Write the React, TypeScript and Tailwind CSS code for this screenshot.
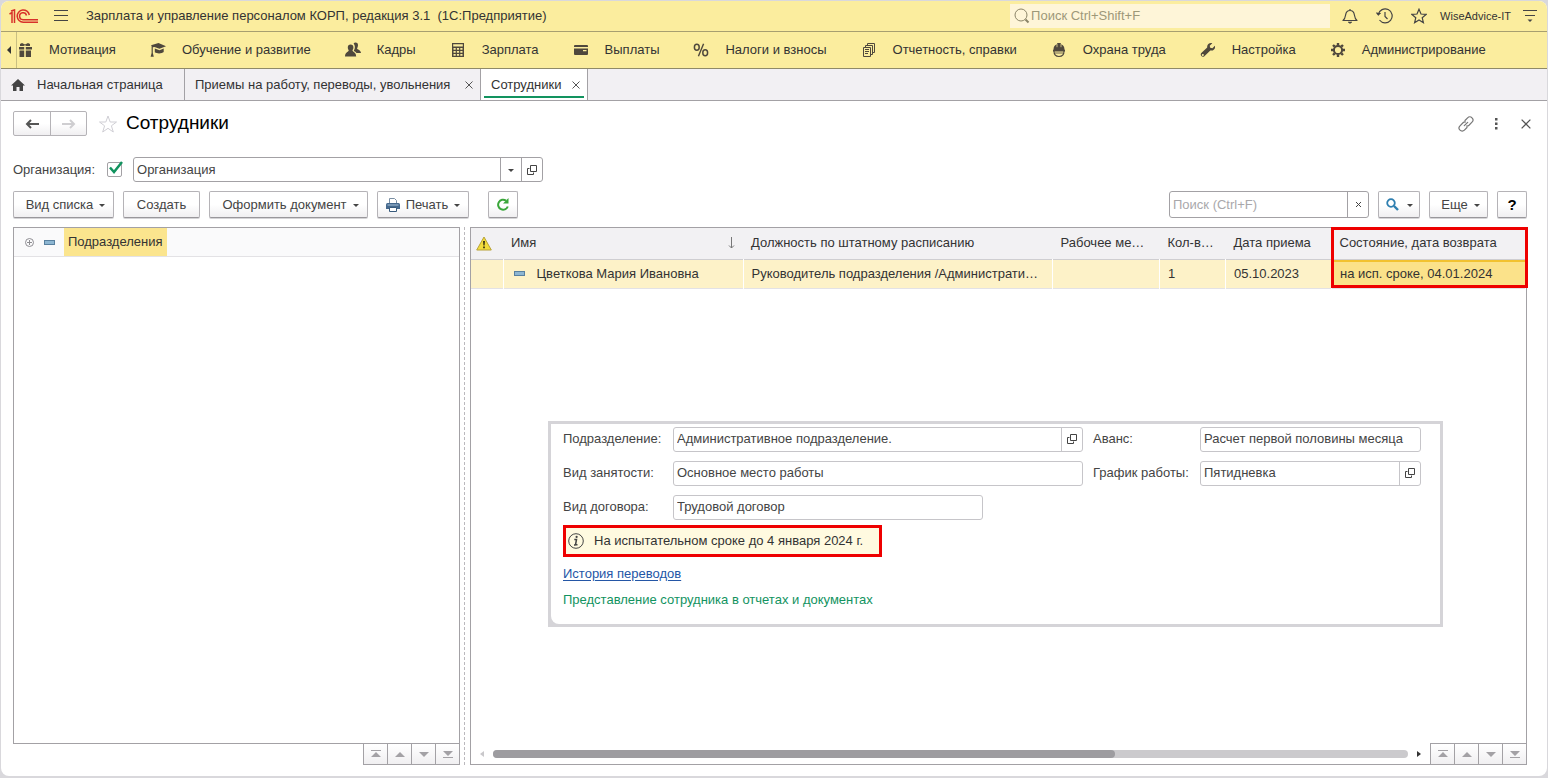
import React, { useState } from 'react';

interface NavItem {
  label: string;
  icon: React.ReactNode;
}

interface EmployeeRow {
  name: string;
  position: string;
  workplace: string;
  count: string;
  hired: string;
  state: string;
}

const GiftIcon = () => (
  <svg width="16" height="16" viewBox="0 0 16 16" fill="currentColor">
    <path d="M2 5h5.2v2.6H2zM8.800 5H15v2.6H8.800zM2.500 8.600h4.700V15H2.500zM8.800 8.600h5.200V15H8.800z" />
    <path d="M3 4V2l2-1 3 1.500L11 1l2 1v2H9.500L8 3.200 6.500 4z" />
  </svg>
);

const CapIcon = () => (
  <svg width="16" height="16" viewBox="0 0 16 16" fill="currentColor">
    <path d="M1 3.200L8.500 1 16 4.200 9.500 6.800 4.500 5 2.800 5.300V11l1 3.800H.6L1.600 11V4z" />
    <path d="M4.800 6.400l4.700 1.800 4.200-1.700V10c-1.600 1.700-6.600 2-8.900.3z" />
  </svg>
);

const PeopleIcon = () => (
  <svg width="16" height="16" viewBox="0 0 16 16" fill="currentColor">
    <path d="M8.600 1.500c1-1.600 4.300-1.400 4.400 1.400 0 2-.8 2.700-.9 3.500-.1 1.200 3.900 1.300 3.900 4.600h-4.600c-.5-1.200-1.800-1.700-2.600-2.100C9.300 7.500 10 6.500 9.800 4.600c0-1-.5-2.200-1.200-3.100z" />
    <path d="M5.600 2.400c1.800 0 2.900 1.100 2.800 3 0 1.400-.6 2.100-.9 2.900-.3 1.600 3.700 1.800 3.700 6.200H0c0-4.400 4-4.600 3.700-6.200-.3-.8-.9-1.500-.9-2.900-.1-1.900 1-3 2.800-3z" />
  </svg>
);

const CalculatorIcon = () => (
  <svg width="16" height="16" viewBox="0 0 16 16" fill="currentColor">
    <path fillRule="evenodd" d="M2 1h12v14H2zM3.200 2.200v2.300h9.600V2.200zM3.500 6v1.800h2.200V6zM6.900 6v1.800h2.200V6zM10.300 6v1.800h2.200V6zM3.500 9v1.800h2.200V9zM6.900 9v1.800h2.200V9zM10.300 9v1.800h2.200V9zM3.500 12v1.800h2.200V12zM6.900 12v1.800h2.200V12zM10.300 12v1.800h2.200V12z" />
  </svg>
);

const CardIcon = () => (
  <svg width="16" height="16" viewBox="0 0 16 16" fill="currentColor">
    <path d="M1 4q0-1 1-1h12q1 0 1 1v1H1z" />
    <path fillRule="evenodd" d="M1 6.500h14V12q0 1-1 1H2q-1 0-1-1zM10 8v1.200h3.500V8z" />
  </svg>
);

const PercentIcon = () => (
  <svg width="16" height="16" viewBox="0 0 16 16" fill="none" stroke="currentColor" strokeWidth="1.500">
    <ellipse cx="3.800" cy="5.200" rx="2.400" ry="3" />
    <ellipse cx="12.200" cy="10.800" rx="2.400" ry="3" />
    <path d="M10.600 1.800L5.400 14.200" strokeWidth="1.400" />
  </svg>
);

const DocsIcon = () => (
  <svg width="16" height="16" viewBox="0 0 16 16" fill="none" stroke="currentColor">
    <path d="M2.500 5.500h7v9h-7zM4.500 5.500v-2h7v9h-2M6.500 3.500v-2h7v9h-2" />
    <path d="M4 7.500h4M4 9.500h4M4 11.500h3" />
  </svg>
);

const HelmetIcon = () => (
  <svg width="16" height="16" viewBox="0 0 16 16">
    <path d="M2.500 7.500c0-3 1.500-4.700 3.300-5.300L6.500 1h3l.7 1.200c1.800.6 3.300 2.300 3.300 5.300l.5.500v1.500H2V8z" fill="currentColor" />
    <path d="M6 2v3.200M10 2v3.200" stroke="#fbed9e" strokeWidth="0.700" />
    <path d="M3 9c0 3.500 2.200 5.500 5 5.500s5-2 5-5.500" fill="none" stroke="currentColor" strokeWidth="1.200" />
    <path d="M4 11h8" stroke="currentColor" strokeWidth="0.800" />
  </svg>
);

const WrenchIcon = () => (
  <svg width="16" height="16" viewBox="0 0 16 16" fill="currentColor">
    <path d="M14.900 3.700l-2.500 2.500-2.200-.5-.5-2 2.600-2.500C9.800.4 6.700 2 7.200 5.500L1.300 11c-1.800 1.700.9 5.200 3.100 3.200l5.900-5.700c3 .7 5.500-1.700 4.600-4.800zM3.800 13.200a1 1 0 1 1-1-1.200 1 1 0 0 1 1 1.200z" />
  </svg>
);

const GearIcon = () => (
  <svg width="16" height="16" viewBox="0 0 16 16" fill="none" stroke="currentColor">
    <circle cx="8" cy="8" r="4.100" strokeWidth="2" />
    <path strokeWidth="2.400" d="M8 1v2.500M8 12.500V15M1 8h2.500M12.500 8H15M3 3l1.700 1.700M11.300 11.300L13 13M13 3l-1.700 1.700M4.700 11.300L3 13" />
  </svg>
);

const OneCLogo = () => (
  <svg width="30" height="14" viewBox="0 0 30 14" fill="none" stroke="#d8322a" strokeWidth="1.500">
    <path d="M.5 5L3 3.500V14M2 2L5.500.9V14" />
    <path d="M20.300 6A6.100 6.100 0 1 0 14.200 13.200H29" />
    <path d="M17.500 6.500A3.500 3.500 0 1 0 14.200 10.700H29" />
  </svg>
);

const WarningIcon = () => (
  <svg width="16" height="15" viewBox="0 0 16 15">
    <path d="M8 1L15.300 14H.7z" fill="#f2dc3c" stroke="#b8a236" strokeLinejoin="round" />
    <path d="M7 5h2l-.4 4.500H7.400zM7.100 10.500h1.800v1.800H7.100z" fill="#3b3512" />
  </svg>
);

const OpenIcon = () => (
  <svg width="10" height="10" viewBox="0 0 10 10" fill="none" stroke="#444">
    <path d="M3.500.5h6v6h-6zM2.500 3.500h-2v6h6v-2" />
  </svg>
);

const PrinterIcon = () => (
  <svg width="14" height="14" viewBox="0 0 14 14">
    <path d="M3.500 6V.5h5l2 2V6z" fill="#fff" stroke="#7a8ea3" />
    <path d="M1.500 5h11q1.500 0 1.500 1.500V11H0V6.500Q0 5 1.500 5z" fill="#44688d" />
    <path d="M1.500 7h11" stroke="#a9c3da" />
    <path d="M3.500 9.500h7v4h-7z" fill="#fff" stroke="#385a7c" />
  </svg>
);

const LinkIcon = () => (
  <svg width="16" height="16" viewBox="0 0 16 16" fill="none" stroke="#777" strokeWidth="1.200" strokeLinecap="round">
    <path d="M7 4.500l2.600-2.700a3 3 0 0 1 4.400 4.400L11 9.200a3 3 0 0 1-2.500.8M9 11.500l-2.600 2.700A3 3 0 0 1 2 9.800l3-3a3 3 0 0 1 2.500-.8M6.300 9.700l3.400-3.400" />
  </svg>
);

const MinusMark = () => <span className="h-[5px] w-[11px] shrink-0 border border-[#58809f] bg-[#8db6d2]" />;

const Caret = () => (
  <svg className="mt-[2px] shrink-0" width="6" height="3" viewBox="0 0 6 3">
    <path d="M0 0h6L3 3z" fill="#444" />
  </svg>
);

const CloseButton = ({ size }: { size: number }) => (
  <button aria-label="Закрыть">
    <svg width={size} height={size} viewBox="0 0 8 8" stroke="#555" strokeWidth="1">
      <path d="M.5.5l7 7M7.500.5l-7 7" />
    </svg>
  </button>
);

const navItems: NavItem[] = [
  { label: 'Мотивация', icon: <GiftIcon /> },
  { label: 'Обучение и развитие', icon: <CapIcon /> },
  { label: 'Кадры', icon: <PeopleIcon /> },
  { label: 'Зарплата', icon: <CalculatorIcon /> },
  { label: 'Выплаты', icon: <CardIcon /> },
  { label: 'Налоги и взносы', icon: <PercentIcon /> },
  { label: 'Отчетность, справки', icon: <DocsIcon /> },
  { label: 'Охрана труда', icon: <HelmetIcon /> },
  { label: 'Настройка', icon: <WrenchIcon /> },
  { label: 'Администрирование', icon: <GearIcon /> },
];

const employees: EmployeeRow[] = [
  {
    name: 'Цветкова Мария Ивановна',
    position: 'Руководитель подразделения /Администрати…',
    workplace: '',
    count: '1',
    hired: '05.10.2023',
    state: 'на исп. сроке, 04.01.2024',
  },
];

const buttonClass =
  'flex h-[27px] items-center justify-center rounded-xs border border-[#b5b3b7] border-b-[#99979b] bg-linear-to-b from-white from-50% to-[#f0eff1] text-[#444] shadow-[0_1px_0_#d5d4d7]';

function Field({ id, value, open, className = '' }: { id: string; value: string; open?: boolean; className?: string }) {
  return (
    <div className={`flex h-[25px] rounded-[3px] border border-[#c6c5c9] bg-white ${className}`}>
      <input id={id} defaultValue={value} className="w-full min-w-0 flex-1 px-[3px] text-[#444] outline-none" />
      {open && (
        <button aria-label="Открыть" className="flex w-[21px] items-center justify-center border-l border-[#c6c5c9]">
          <OpenIcon />
        </button>
      )}
    </div>
  );
}

function ListButtons() {
  const arrows = [
    { label: 'В начало', path: 'M1 1h10v1H1zM1 8h10L6 3z' },
    { label: 'Вверх', path: 'M1 8h10L6 3z' },
    { label: 'Вниз', path: 'M1 3h10L6 8z' },
    { label: 'В конец', path: 'M1 2h10L6 7zM1 8h10v1H1z' },
  ];
  return (
    <div className="flex border-t border-[#a3a1a5]">
      {arrows.map(arrow => (
        <button
          key={arrow.label}
          aria-label={arrow.label}
          className="box-content flex h-5 w-[23px] items-center justify-center border-l border-[#a3a1a5] bg-linear-to-b from-white to-[#f0eff1]"
        >
          <svg width="12" height="10" viewBox="0 0 12 10">
            <path d={arrow.path} fill="#a3a1a5" />
          </svg>
        </button>
      ))}
    </div>
  );
}

export default function App() {
  const [orgEnabled, setOrgEnabled] = useState(true);

  return (
    <div className="flex min-h-screen flex-col bg-[#d9d8dc] px-px pt-px pb-[2px] font-['Liberation_Sans',Arial,sans-serif] text-[13px] leading-4 text-[#333]">
      <div className="flex flex-1 flex-col overflow-hidden rounded-lg bg-white">
        {/* Title bar */}
        <header className="flex h-[31px] items-center border-b border-[#a79f70] bg-[#fbed9e] pr-[10px] pl-2">
          <OneCLogo />
          <button aria-label="Меню" className="ml-[15px]">
            <svg width="14" height="12" viewBox="0 0 14 12" stroke="#444">
              <path d="M0 .5h14M0 5.500h14M0 10.500h14" />
            </svg>
          </button>
          <h1 className="ml-[18px] whitespace-pre">Зарплата и управление персоналом КОРП, редакция 3.1  (1С:Предприятие)</h1>
          <label className="ml-auto flex h-6 w-80 items-center bg-[#fef5d8] px-1">
            <svg width="16" height="16" viewBox="0 0 16 16" fill="none" stroke="#8a8468">
              <circle cx="7" cy="7" r="6" />
              <path d="M11.500 11.500l3 3" strokeWidth="2" />
            </svg>
            <input aria-label="Поиск" placeholder="Поиск Ctrl+Shift+F" className="ml-px min-w-0 flex-1 outline-none placeholder:text-[#9d9878]" />
          </label>
          <div className="ml-3 flex items-center">
            <button aria-label="Уведомления" className="mr-[18px]">
              <svg width="16" height="16" viewBox="0 0 16 16" fill="none" stroke="#444" strokeWidth="1.200">
                <path d="M1 12.500c2-1.500 2.200-2.800 2.600-5.500C4 4 5.500 2.500 8 2.500S12 4 12.400 7c.4 2.700.6 4 2.600 5.500zM8 1v1.500" strokeLinejoin="round" />
                <path d="M6 14h4l-2 1.500z" fill="#444" strokeWidth="0.500" />
              </svg>
            </button>
            <button aria-label="История" className="mr-[18px]">
              <svg width="17" height="16" viewBox="0 0 17 16" fill="none" stroke="#444" strokeWidth="1.200">
                <path d="M2.300 6.500A7 7 0 1 1 3.500 12M9 4v4.500l2.500 2.500" />
                <path d="M0 4.500l2.200 3L5 5" fill="#444" strokeWidth="0.500" />
              </svg>
            </button>
            <button aria-label="Избранное" className="mr-[13px]">
              <svg width="16" height="16" viewBox="0 0 16 16" fill="none" stroke="#444" strokeWidth="1.200">
                <path d="M8 1.200l2 4.800 5.100.4-3.900 3.300 1.200 5L8 12l-4.400 2.700 1.200-5L.9 6.400 6 6z" />
              </svg>
            </button>
            <span className="text-[11px]">WiseAdvice-IT</span>
            <button aria-label="Настройки окна" className="ml-3">
              <svg width="14" height="14" viewBox="0 0 14 14">
                <path d="M0 1.500h14M2 6.500h10" stroke="#444" />
                <path d="M4.500 10.500h5L7 13z" fill="#444" />
              </svg>
            </button>
          </div>
        </header>

        {/* Sections */}
        <nav className="flex h-[37px] items-center border-b border-[#8f8a68] bg-[#fbed9e]">
          <button aria-label="Назад" className="flex h-full w-4 items-center justify-center border-r border-[#c9bf82]">
            <svg width="4" height="8" viewBox="0 0 4 8">
              <path d="M4 0v8L0 4z" fill="#333" />
            </svg>
          </button>
          <div className="flex gap-[34px]">
            {navItems.map(item => (
              <a key={item.label} href="#" className="flex items-center gap-4 whitespace-nowrap">
                <span className="text-[#4f483c]">{item.icon}</span>
                {item.label}
              </a>
            ))}
          </div>
        </nav>

        {/* Open tabs */}
        <div className="flex h-8 border-b border-[#a3a1a5] bg-[#f2f0f3]">
          <button className="flex w-[184px] items-center gap-3 border-r border-[#a3a1a5] pl-[10px]">
            <svg width="14" height="12" viewBox="0 0 14 12" fill="#444">
              <path d="M7 0l7 6.500h-2V12H8.500V8h-3v4H2V6.500H0z" />
            </svg>
            Начальная страница
          </button>
          <div className="flex w-[296px] items-center justify-between border-r border-[#a3a1a5] pr-[7px] pl-[10px]">
            <button>Приемы на работу, переводы, увольнения</button>
            <CloseButton size={8} />
          </div>
          <div className="w-[107px] border-r border-[#a3a1a5] bg-white px-[3px]">
            <div className="flex h-[29px] items-center justify-between border-b-2 border-[#12935f] pt-1 pr-1 pl-[7px]">
              <button>Сотрудники</button>
              <CloseButton size={8} />
            </div>
          </div>
        </div>

        <main className="flex flex-1 flex-col pt-[10px] pr-5 pb-[11px] pl-3">
          {/* Form title */}
          <div className="flex items-center">
            <div className="flex h-[25px] rounded-xs border border-[#b5b3b7] bg-linear-to-b from-white from-50% to-[#f0eff1]">
              <button aria-label="Назад" className="flex w-[37px] items-center justify-center border-r border-[#b5b3b7]">
                <svg width="14" height="10" viewBox="0 0 14 10" fill="none" stroke="#555" strokeWidth="2">
                  <path d="M14 5H2M6 1L2 5l4 4" />
                </svg>
              </button>
              <button aria-label="Вперед" className="flex w-[35px] items-center justify-center">
                <svg width="14" height="10" viewBox="0 0 14 10" fill="none" stroke="#cfced1" strokeWidth="2">
                  <path d="M0 5h12M8 1l4 4-4 4" />
                </svg>
              </button>
            </div>
            <button aria-label="В избранное" className="ml-3">
              <svg width="18" height="18" viewBox="0 0 18 18" fill="none" stroke="#cfced4">
                <path d="M9 1l2.200 6H17.500l-5.100 3.800 1.900 6.200L9 13.300 3.700 17l1.900-6.200L.5 7h6.300z" />
              </svg>
            </button>
            <h2 className="ml-[9px] pb-[2px] text-[19px] leading-[22px] text-black">Сотрудники</h2>
            <button aria-label="Ссылка" className="ml-auto">
              <LinkIcon />
            </button>
            <button aria-label="Еще" className="ml-[21px]">
              <svg width="3" height="12" viewBox="0 0 3 12" fill="#555">
                <path d="M0 0h2.500v2.500H0zM0 4.500h2.500V7H0zM0 9h2.500v2.500H0z" />
              </svg>
            </button>
            <div className="-mr-1 ml-[23px] flex">
              <CloseButton size={10} />
            </div>
          </div>

          {/* Organization filter */}
          <div className="mt-[21px] flex items-center">
            <label htmlFor="org-enabled" className="text-[#444]">Организация:</label>
            <span className="relative ml-3 flex">
              <input
                id="org-enabled"
                type="checkbox"
                checked={orgEnabled}
                onChange={e => setOrgEnabled(e.target.checked)}
                className="h-[15px] w-[15px] appearance-none rounded-xs border border-[#a3a1a5] bg-white"
              />
              {orgEnabled && (
                <svg className="pointer-events-none absolute -top-px left-px" width="16" height="14" viewBox="0 0 16 14" fill="none" stroke="#12935f" strokeWidth="2.500">
                  <path d="M2 6.500l4 4.500L14 1" />
                </svg>
              )}
            </span>
            <div className="ml-[11px] flex h-[25px] w-[410px] rounded-[3px] border border-[#a3a1a5]">
              <input aria-label="Организация" defaultValue="Организация" className="min-w-0 flex-1 px-[3px] text-[#444] outline-none" />
              <button aria-label="Выбрать" className="flex w-[21px] items-center justify-center border-l border-[#a3a1a5]">
                <Caret />
              </button>
              <button aria-label="Открыть" className="flex w-[21px] items-center justify-center border-l border-[#a3a1a5]">
                <OpenIcon />
              </button>
            </div>
          </div>

          {/* Toolbar */}
          <div className="mt-[9px] flex items-center">
            <button className={`${buttonClass} w-[101px] gap-[6px] pl-1`}>
              Вид списка <Caret />
            </button>
            <button className={`${buttonClass} ml-[9px] w-[77px]`}>Создать</button>
            <button className={`${buttonClass} ml-[9px] w-[159px] gap-[6px] pl-1`}>
              Оформить документ <Caret />
            </button>
            <button className={`${buttonClass} ml-[9px] w-[92px] gap-[6px]`}>
              <PrinterIcon /> Печать <Caret />
            </button>
            <button aria-label="Обновить" className={`${buttonClass} ml-[19px] w-[30px]`}>
              <svg width="12" height="13" viewBox="0 0 12 13" fill="none" stroke="#3aa63a" strokeWidth="2">
                <path d="M9 2.600A5 5 0 1 0 10.800 8.500" />
                <path d="M11.500 0v5.500H6z" fill="#3aa63a" stroke="none" />
              </svg>
            </button>
            <div className="ml-auto flex h-[27px] w-[200px] rounded-[3px] border border-[#a3a1a5]">
              <input aria-label="Поиск по списку" placeholder="Поиск (Ctrl+F)" className="min-w-0 flex-1 px-[3px] outline-none placeholder:text-[#a9a8ab]" />
              <button aria-label="Очистить" className="flex w-[21px] items-center justify-center border-l border-[#a3a1a5]">
                <svg width="5" height="5" viewBox="0 0 5 5" stroke="#444">
                  <path d="M0 0l5 5M5 0L0 5" />
                </svg>
              </button>
            </div>
            <button aria-label="Найти" className={`${buttonClass} ml-[9px] w-[42px] gap-2`}>
              <svg width="13" height="13" viewBox="0 0 13 13" fill="none" stroke="#2f7fb0">
                <circle cx="5" cy="5" r="3.800" strokeWidth="1.800" />
                <path d="M8 8l4 4" strokeWidth="2.400" />
              </svg>
              <Caret />
            </button>
            <button className={`${buttonClass} ml-[9px] w-[59px] gap-[6px] pl-1`}>
              Еще <Caret />
            </button>
            <button aria-label="Справка" className={`${buttonClass} ml-[9px] w-[30px] text-[15px] font-bold text-black`}>?</button>
          </div>

          <div className="mt-[9px] flex flex-1">
            {/* Departments tree */}
            <section className="flex w-[447px] shrink-0 flex-col">
              <div className="flex-1 border border-b-0 border-[#a3a1a5]">
                <div className="flex h-[29px] items-center border-b border-[#e3e2e5] bg-[#fafafb] pl-[11px]">
                  <svg width="9" height="9" viewBox="0 0 9 9" fill="none" stroke="#8f8e92">
                    <circle cx="4.500" cy="4.500" r="4" />
                    <path d="M2 4.500h5M4.500 2v5" />
                  </svg>
                  <span className="ml-[10px] flex">
                    <MinusMark />
                  </span>
                  <span className="ml-[9px] flex h-7 items-center bg-[#fbe58e] px-1">Подразделения</span>
                </div>
              </div>
              <div className="flex">
                <div className="flex-1 border-t border-l-0 border-[#a3a1a5]" />
                <div className="border-r border-b border-[#a3a1a5]">
                  <ListButtons />
                </div>
              </div>
            </section>

            <div className="mr-[5px] ml-1 border-l border-dashed border-[#bbb9bd]" />

            {/* Employees list */}
            <section className="relative flex min-w-0 flex-1 flex-col border border-[#a3a1a5]">
              <table className="w-full table-fixed border-collapse text-left">
                <colgroup>
                  <col className="w-8" />
                  <col className="w-[240px]" />
                  <col />
                  <col className="w-[107px]" />
                  <col className="w-[66px]" />
                  <col className="w-[106px]" />
                  <col className="w-[194px]" />
                </colgroup>
                <thead>
                  <tr className="h-[31px] border-b border-[#cfced1] bg-[#f2f1f3] *:border-r *:border-[#cfced1] *:px-2 *:font-normal last:*:border-r-0">
                    <th>
                      <span className="-mx-[3px] flex">
                        <WarningIcon />
                      </span>
                    </th>
                    <th>
                      <span className="flex items-center justify-between">
                        Имя
                        <svg width="7" height="12" viewBox="0 0 7 12" fill="none" stroke="#777">
                          <path d="M3.500 0v11M1 8.500L3.500 11 6 8.500" />
                        </svg>
                      </span>
                    </th>
                    <th>Должность по штатному расписанию</th>
                    <th>Рабочее ме…</th>
                    <th>Кол-в…</th>
                    <th>Дата приема</th>
                    <th>Состояние, дата возврата</th>
                  </tr>
                </thead>
                <tbody>
                  {employees.map(row => (
                    <tr key={row.name} className="h-[29px] border-b border-[#e3e2e5] bg-[#fdf2c8] *:border-r *:border-white *:px-2 *:whitespace-nowrap">
                      <td />
                      <td>
                        <span className="flex items-center gap-3 pl-[2px]">
                          <MinusMark />
                          {row.name}
                        </span>
                      </td>
                      <td>{row.position}</td>
                      <td>{row.workplace}</td>
                      <td>{row.count}</td>
                      <td>{row.hired}</td>
                      <td className="bg-[#fbe28a] shadow-[inset_0_2px_0_#f2c230]">{row.state}</td>
                    </tr>
                  ))}
                </tbody>
              </table>
              <div className="pointer-events-none absolute -top-px -right-[2px] h-[61px] w-[197px] border-3 border-[#ee0000]" />

              {/* Employee details */}
              <div className="mt-[132px] mr-[83px] ml-[77px] bg-[#d5d4d8] p-[3px]">
                <div className="rounded-bl-lg bg-white px-3 pt-[3px] pb-4 text-[#444]">
                  <div className="grid grid-cols-[100px_minmax(0,410px)_97px_minmax(0,221px)] items-center gap-x-[10px] gap-y-[9px]">
                    <label htmlFor="department">Подразделение:</label>
                    <Field id="department" value="Административное подразделение." open />
                    <label htmlFor="advance">Аванс:</label>
                    <Field id="advance" value="Расчет первой половины месяца" />
                    <label htmlFor="employment">Вид занятости:</label>
                    <Field id="employment" value="Основное место работы" />
                    <label htmlFor="schedule">График работы:</label>
                    <Field id="schedule" value="Пятидневка" open />
                    <label htmlFor="contract">Вид договора:</label>
                    <Field id="contract" value="Трудовой договор" className="w-[310px]" />
                  </div>
                  <div className="mt-[5px] flex h-8 w-[319px] items-center gap-[10px] border-3 border-[#ee0000] bg-[#fffae0] pl-[2px] text-[#333]">
                    <svg width="16" height="16" viewBox="0 0 16 16" fill="none" stroke="#444">
                      <circle cx="8" cy="8" r="7.300" />
                      <path d="M6.300 6.500h2.200l-1 5.300h2M6 12h1.500" strokeWidth="1.500" />
                      <circle cx="8.600" cy="3.900" r="1.100" fill="#444" stroke="none" />
                    </svg>
                    На испытательном сроке до 4 января 2024 г.
                  </div>
                  <a href="#" className="mt-[9px] block w-fit text-[#2456a6] underline underline-offset-2">История переводов</a>
                  <p className="mt-[10px] text-[#12935f]">Представление сотрудника в отчетах и документах</p>
                </div>
              </div>

              {/* Horizontal scroll and list navigation */}
              <div className="mt-auto flex items-center">
                <svg className="mx-[9px]" width="4" height="6" viewBox="0 0 4 6">
                  <path d="M4 0v6L0 3z" fill="#c9c8cb" />
                </svg>
                <div className="h-2 flex-1 rounded-full bg-[#cbcacd]">
                  <div className="h-2 w-[68%] rounded-full bg-[#9d9ca0]" />
                </div>
                <svg className="mx-[9px]" width="4" height="6" viewBox="0 0 4 6">
                  <path d="M0 0v6l4-3z" fill="#333" />
                </svg>
                <ListButtons />
              </div>
            </section>
          </div>
        </main>
      </div>
    </div>
  );
}
